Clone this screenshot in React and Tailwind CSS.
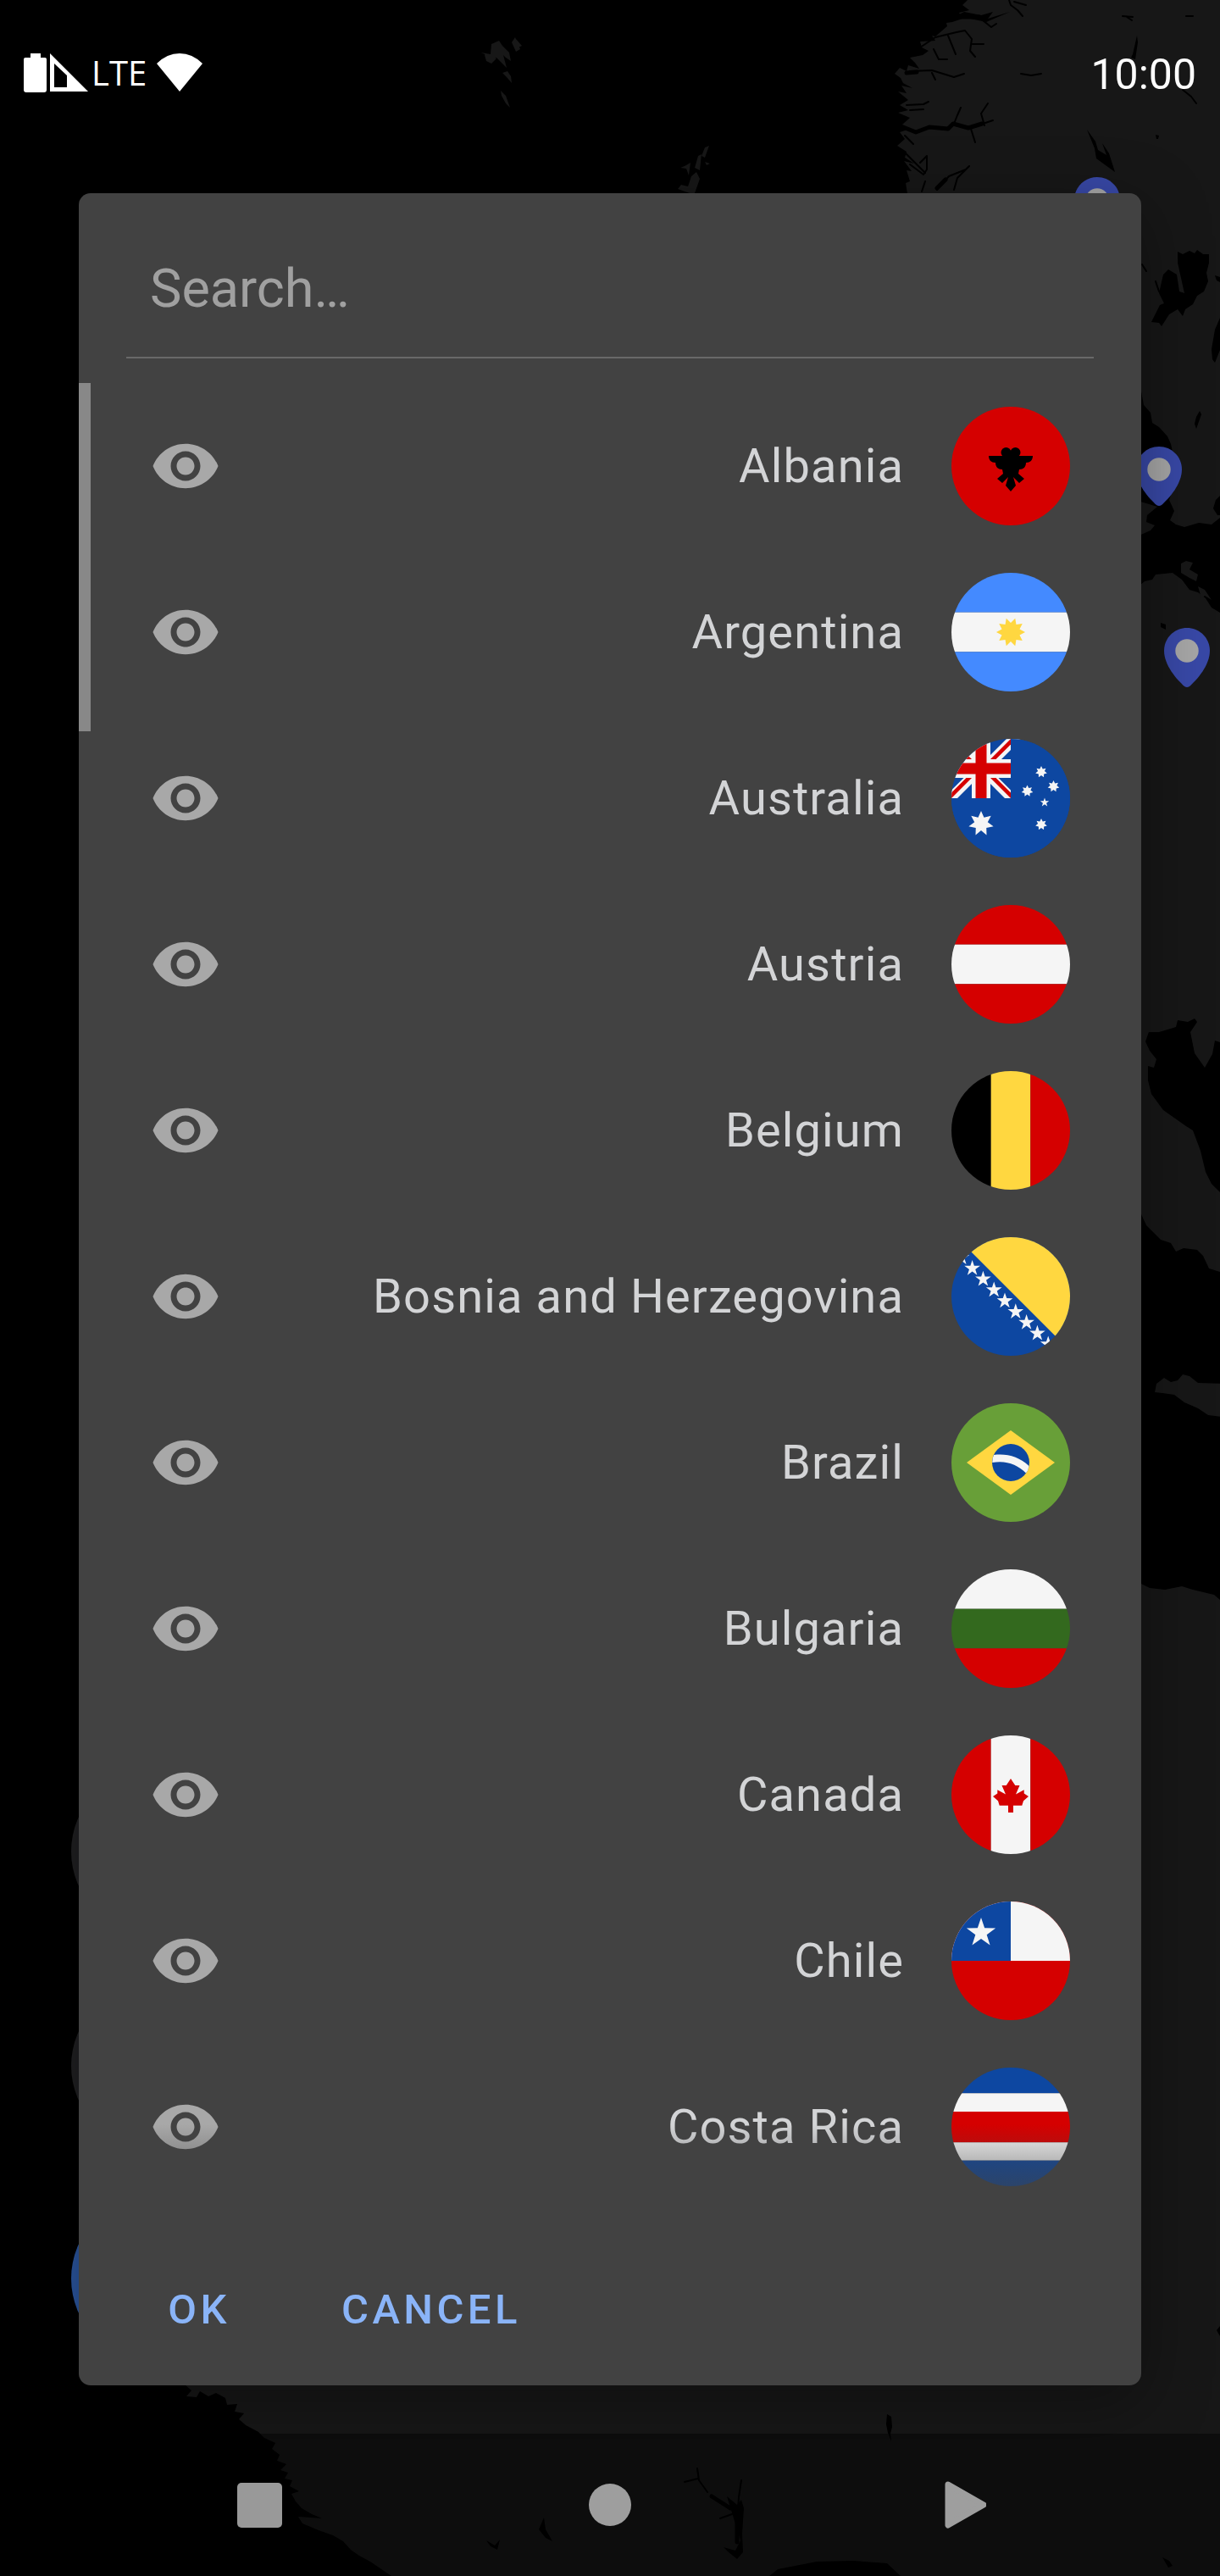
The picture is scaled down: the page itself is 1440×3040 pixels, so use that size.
import React from "react";

const RED = "#d50000";
const WHITE = "#f5f5f5";
const BLUE = "#0d47a1";
const YELLOW = "#ffd740";

function starPoints(cx, cy, outer, inner, count, turn = 0) {
  const pts = [];
  for (let i = 0; i < count * 2; i++) {
    const r = i % 2 === 0 ? outer : inner;
    const a = (Math.PI * i) / count - Math.PI / 2 + turn;
    pts.push(`${(cx + r * Math.cos(a)).toFixed(2)},${(cy + r * Math.sin(a)).toFixed(2)}`);
  }
  return pts.join(" ");
}

function Star({ x, y, r, inner = r * 0.39, n = 5, turn = 0, fill = WHITE }) {
  return <polygon points={starPoints(x, y, r, inner, n, turn)} fill={fill} />;
}

function Bands({ colors, stops, vertical }) {
  return colors.map((c, i) =>
    vertical ? (
      <rect key={i} x={stops[i]} y="0" width={stops[i + 1] - stops[i]} height="140" fill={c} />
    ) : (
      <rect key={i} x="0" y={stops[i]} width="140" height={stops[i + 1] - stops[i]} fill={c} />
    )
  );
}

const THIRDS = [0, 46.7, 93.3, 140];

const FLAGS = {
  al: (
    <>
      <rect width="140" height="140" fill={RED} />
      <circle cx="64.5" cy="54" r="6" />
      <circle cx="75.5" cy="54" r="6" />
      <path d="M62 58H44c0 5 3 8 8 8 0 5 3 8 8 8l1 5-7 6 6 5 7-7-3 10 6 7 6-7-3-10 7 7 6-5-7-6 1-5c5 0 8-3 8-8 5 0 8-3 8-8H78l-1-3H63z" />
    </>
  ),
  ar: (
    <>
      <Bands colors={["#448aff", WHITE, "#448aff"]} stops={THIRDS} />
      <Star x={70} y={70} r={17} inner={11} n={10} turn={Math.PI / 10} fill={YELLOW} />
    </>
  ),
  au: (
    <>
      <rect width="140" height="140" fill={BLUE} />
      <g fill={WHITE}>
        <path d="M0 -7L35 28 35 44.5 0 9.5z" />
        <path d="M35 25.5L70 60.5 70 77 35 42z" />
        <path d="M35 30L65 0H83L35 48z" />
        <path d="M0 60.5L35 25.5V42L7 70H0z" />
      </g>
      <g fill={RED}>
        <path d="M0 0L35 35V41.5L0 6.5z" />
        <path d="M35 28.5L70 63.5V70L35 35z" />
        <path d="M35 35L70 0V6.5L35 41.5z" />
        <path d="M0 63.5L35 28.5V35L0 70z" />
      </g>
      <path d="M24 0H46V24H70V46H46V70H24V46H0V24H24z" fill={WHITE} />
      <path d="M28.5 0H41.5V28.5H70V41.5H41.5V70H28.5V41.5H0V28.5H28.5z" fill={RED} />
      <path d="M70 0H140V140H0V70H70z" fill={BLUE} />
      <Star x={35} y={100} r={15} inner={8} n={7} />
      <Star x={106} y={39} r={7} inner={4} n={7} />
      <Star x={120.5} y={56} r={7} inner={4} n={7} />
      <Star x={89.5} y={61.5} r={7} inner={4} n={7} />
      <Star x={106} y={101} r={7} inner={4} n={7} />
      <Star x={110} y={75} r={5.5} />
    </>
  ),
  at: <Bands colors={[RED, WHITE, RED]} stops={THIRDS} />,
  be: <Bands colors={["#000000", YELLOW, RED]} stops={THIRDS} vertical />,
  ba: (
    <>
      <rect width="140" height="140" fill={BLUE} />
      <path d="M6 0H140V134z" fill={YELLOW} />
      {[0, 1, 2, 3, 4, 5, 6, 7, 8].map((i) => (
        <Star key={i} x={11.8 + i * 12.8} y={24 + i * 12.8} r={9.8} />
      ))}
    </>
  ),
  br: (
    <>
      <rect width="140" height="140" fill="#689f38" />
      <path d="M18 70L70 32 122 70 70 108z" fill={YELLOW} />
      <circle cx="70" cy="70" r="22" fill={BLUE} />
      <path d="M50 61C65 59 80 63 91.5 74Q91 79 88 82.5C78 72 64 67 48.2 70Q48 65 50 61z" fill={WHITE} />
    </>
  ),
  bg: <Bands colors={[WHITE, "#33691e", RED]} stops={THIRDS} />,
  ca: (
    <>
      <Bands colors={[RED, WHITE, RED]} stops={THIRDS} vertical />
      <path
        d="M70 51L75.3 59H80.5L76 69.5 85.7 64.3V68.5L91 72 85 77.3 83.3 82.7H73V91H67V82.7H56.7L55 77.3 49 72 54.3 68.5V64.3L64 69.5 59.5 59H64.7z"
        fill={RED}
      />
    </>
  ),
  cl: (
    <>
      <rect width="140" height="140" fill={RED} />
      <rect width="140" height="70" fill={WHITE} />
      <rect width="70" height="70" fill={BLUE} />
      <Star x={35} y={37} r={18} />
    </>
  ),
  cr: <Bands colors={[BLUE, WHITE, RED, WHITE, BLUE]} stops={[0, 30.3, 52, 88.3, 109.7, 140]} />,
};

const COUNTRIES = [
  ["al", "Albania"],
  ["ar", "Argentina"],
  ["au", "Australia"],
  ["at", "Austria"],
  ["be", "Belgium"],
  ["ba", "Bosnia and Herzegovina"],
  ["br", "Brazil"],
  ["bg", "Bulgaria"],
  ["ca", "Canada"],
  ["cl", "Chile"],
  ["cr", "Costa Rica"],
];

function Flag({ code }) {
  return (
    <svg viewBox="0 0 140 140" className="size-35 shrink-0 rounded-full" aria-hidden="true">
      {FLAGS[code]}
    </svg>
  );
}

function EyeIcon() {
  return (
    <svg viewBox="0 0 24 24" className="size-21" fill="#a8a8a8" aria-hidden="true">
      <path d="M12 4.500C7 4.500 2.730 7.610 1 12c1.730 4.390 6 7.500 11 7.500s9.270-3.110 11-7.500c-1.730-4.390-6-7.500-11-7.500zM12 17c-2.760 0-5-2.240-5-5s2.240-5 5-5 5 2.240 5 5-2.240 5-5 5zm0-8c-1.660 0-3 1.340-3 3s1.340 3 3 3 3-1.340 3-3-1.340-3-3-3z" />
    </svg>
  );
}

function Pin({ x, y }) {
  return (
    <g transform={`translate(${x} ${y})`}>
      <path d="M0 -27C-15 -27 -27 -15 -27 0C-27 17 -12 34 -3 42Q0 44 3 42C12 34 27 17 27 0C27 -15 15 -27 0 -27z" fill="#3848a6" />
      <circle r="13.7" fill="#a6a6a6" />
    </g>
  );
}

function MapBackground() {
  return (
    <svg
      viewBox="0 0 1440 3040"
      preserveAspectRatio="xMidYMid slice"
      className="absolute inset-0 h-full w-full"
      aria-hidden="true"
    >
      <rect width="1440" height="3040" fill="#000" />
      {/* land */}
      <g fill="#171717">
        <path d="M1142 0L1136 6 1144 12 1132 15 1136 22 1124 26 1117 27 1118 31 1104 43 1100 42 1104 48 1086 49 1088 56 1096 60 1089 65 1074 68 1080 74 1085 81 1072 77 1070 84 1062 80 1056 87 1063 92 1066 98 1077 104 1064 101 1070 110 1060 108 1072 118 1062 124 1072 130 1060 133 1074 139 1065 147 1074 152 1062 156 1068 164 1059 172 1070 179 1068 186 1079 193 1067 190 1076 202 1070 201 1074 214 1069 216 1076 260H1347V462L1350 478 1358 487 1360 499 1368 504 1378 515 1382 524 1390 560 1380 590 1386 603 1381 614 1388 619 1398 622 1415 617 1430 619 1440 611V0z" />
        <path d="M1340 590L1366 598 1354 608 1353 616 1363 620 1358 626 1340 634z" />
        <path d="M1340 695L1351 686 1360 684 1364 678 1384 676 1395 684 1404 696 1414 699 1423 706 1430 717 1440 723V1230L1434 1228 1431 1244 1422 1260 1410 1243 1405 1218 1413 1206 1410 1202 1402 1206 1390 1204 1388 1212 1368 1218 1356 1218 1352 1229 1357 1240 1365 1250 1362 1260 1355 1258V1275L1359 1291 1373 1310 1400 1329 1408 1334 1417 1358 1423 1383 1430 1397 1440 1407V1501L1427 1497 1420 1482 1413 1475 1397 1473 1388 1477 1382 1467 1370 1463 1353 1446 1347 1433H1340z" />
        <path d="M1340 1869H1347L1357 1874 1375 1876 1395 1872 1408 1876 1433 1882 1440 1888V3040H462L437 3023 424 3016 414 3009 405 2999 393 2992 376 2986 357 2978 352 2970 380 2972 368 2967 356 2960 349 2952 344 2943 353 2940 342 2934 345 2927 336 2925 340 2918 331 2915 338 2908 327 2904 330 2897 321 2890 325 2883 312 2877 305 2870 290 2862 282 2855 288 2848 277 2846 280 2837 268 2838 266 2830 255 2824 246 2828 236 2822 232 2829 220 2828 226 2821 219 2815V2760H1340z" />
        <path d="M1363 1643l2-10 9-7 8 5 8-2 6-7 8 2 10 8 36 1v45l-9-6-15-2-12-8-16-7-12-9-14-2z" />
        <path d="M580 52l9-4 4 6 8 8 2 10-6-4-3-3 4 15-12-12-10 4-4-8-4-2 11 2zM572 65l14 4-6 6-6-3zM593 86l6-2 4 6 1 8-6-7zM591 107l6 6 5 14-5-5-5-9zM604 50l4-6 6 14-5 3zM609 46l7 8-4 2z" />
        <path d="M832 174l5-2-5 14-4-2zM824 184l4-2-2 19-6-3zM832 191l6 2-4 2zM808 196l7-4-2 15-3-8-7-1zM816 208l6-5 4 8-6 17h-6l-14-5 4-5 8 2z" />
        <path d="M1394 665l6-3 8 2-4 8 10 6-2 8-8-4-10-6zM1414 692l8 4 8 12-8-5-4 3z" />
      </g>
      {/* lakes */}
      <g fill="#000">
        <path d="M1390 297l6 3 8-4 6 3 3-4 7 5 7 0 0 10-3 12 2 10-5 12-8 5-5 10-9 6-3 8-6-8-10 6-9 14-3-4-9-1 10-20 5-2-6-12 5-22 6-6 10 6 3 20 6 2-8-36z" />
        <path d="M1440 375l-6 14-4 23 1 12 3 4 6-15zM1434 325l2 6 4 2v-6zM1412 492l4-7 2 4-6 17-2-6zM1283 153l10 14 3 10 10 6-5-14 8 12 7 22-22-16-2-12zM1337 64l5-22 1 8-3 20-5-2zM1364 159l4 1-1 4-2 0zM1370 735l6 2v6l-6-3zM1440 585l-5 5-3 10 5 8h3z" />
        <path d="M1047 2849l5 3 1 12-2 8 1 9-4-10-2-10zM858 2946l12 10 5-6 3 10-2 30 1 22-7 8-10-8-6-6 14 4 6-12zM1372 3018l8 4 4 6-5 2z" />
        <path d="M908 3040l10-8 46-9 43-1 40 3 16 15zM636 2985l6-14 2 14 8 14-8-4zM574 2998l10 6 6-7-3 12-8-4zM1436 2750l4-5v12z" />
        <path d="M1138 14l20 4 14-4-6 8 26-8-28 12-28-6-6-2z" />
      </g>
      {/* fjords and rivers */}
      <g fill="none" stroke="#000" strokeLinecap="round" strokeLinejoin="round">
        <g strokeWidth="2">
          <path d="M1191 0l2 6 8 6 6 7M1197 2l14 4M1160 24l10 8 6-4M1074 64l30-20 25-6 10-2 8 10-2 14 6 7M1147 52l14 0M1119 42l9 22M1102 58l6 12 10 0M1074 84l26-1 26 8 12-4M1100 86l4 8M1205 87l12 2 12-2M1070 124l20-1 6-3M1074 130l16-1M1126 146l4-10 4-9M1162 148l-4-14 8-12M1160 146l12-4M1146 152l5 16M1068 160l10 10M1074 194l16 12 4-6v-16l-8 8M1068 180l24 24M1106 224l14-16 20-8M1126 224l4-14 14-14M1088 226l4-12M1400 19l8 0M1325 19l12 1M1330 20l6 4M1396 106l10 8 6 8M1348 312l5 8M1364 332l4 12M823 2913l2 14 10 14M808 2929l16-4M875 2927l-3 20-1 14M850 2972l14-5" />
        </g>
        <g strokeWidth="5">
          <path d="M1066 150l15 6 16-6 22 2 6-6 18 5 16-5M1070 86l12-1M1134 20l22 0M1106 222l10-10M840 2946l22 14M870 2960v40" />
        </g>
      </g>
      {/* floating buttons behind the dialog */}
      <circle cx="182" cy="2185" r="98" fill="#202022" />
      <circle cx="182" cy="2438" r="98" fill="#202022" />
      <circle cx="182" cy="2689" r="98" fill="#2b569f" />
      <Pin x={1295} y={236} />
      <Pin x={1368} y={554} />
      <Pin x={1401} y={768} />
    </svg>
  );
}

function StatusBar() {
  return (
    <header className="flex h-[172px] w-full items-center justify-between px-7 text-white">
      <div className="flex items-center">
        <svg viewBox="0 0 76 46" className="h-[46px] w-[76px]" fill="#fff" aria-hidden="true">
          <path d="M8 0H20V5H25Q27 5 27 7V43Q27 46 24 46H3Q0 46 0 43V7Q0 5 2 5H8z" />
          <path d="M31 0L76 45H31zM36 12V40H51V26z" fillRule="evenodd" />
        </svg>
        <span className="ml-1 font-['Open_Sans',sans-serif] text-[40px] leading-none">LTE</span>
        <svg viewBox="0 0 54 46" className="ml-3 h-[46px] w-[54px]" fill="#fff" aria-hidden="true">
          <path d="M0 12Q12 0 27 0T54 12L27 45z" />
        </svg>
      </div>
      <time className="pt-1 text-[50px] leading-none">10:00</time>
    </header>
  );
}

function CountryRow({ code, name }) {
  return (
    <li className="flex h-49 items-center px-21">
      <button type="button" aria-label={`Show ${name}`} className="shrink-0">
        <EyeIcon />
      </button>
      <span className="min-w-0 flex-1 truncate pr-14 text-right text-[56px] leading-[66px] tracking-[0.02em] text-[#d3d4d6]">
        {name}
      </span>
      <Flag code={code} />
    </li>
  );
}

function CountryDialog() {
  return (
    <section
      role="dialog"
      aria-label="Countries"
      className="overflow-hidden rounded-[14px] bg-[#424242] shadow-[0_20px_80px_rgba(0,0,0,0.35)]"
    >
      <div className="h-56 px-14 pt-8">
        <input
          type="text"
          placeholder="Search…"
          aria-label="Search countries"
          className="block h-[163px] w-full border-b-2 border-[#696969] bg-transparent px-7 text-[63px] text-white outline-none placeholder:text-[#a0a0a0]"
        />
      </div>
      <div className="relative">
        <ul className="pb-[25px]">
          {COUNTRIES.map(([code, name]) => (
            <CountryRow key={code} code={code} name={name} />
          ))}
        </ul>
        <div className="absolute top-0 left-0 h-[411px] w-3.5 bg-[#888888]" />
        <div className="pointer-events-none absolute inset-x-0 bottom-0 h-[126px] bg-linear-to-b from-[#424242]/0 to-[#424242]" />
      </div>
      <div className="flex h-[182px] items-center gap-7 px-[30px] pt-1 text-[49px] font-medium tracking-[0.09em] text-[#8ab4f8]">
        <button type="button" className="min-w-56 px-7">
          OK
        </button>
        <button type="button" className="min-w-56 px-7">
          CANCEL
        </button>
      </div>
    </section>
  );
}

function NavigationBar() {
  return (
    <nav aria-label="System navigation" className="mt-auto grid h-42 grid-cols-3 items-center justify-items-center bg-black/40 px-[99px]">
      <button type="button" aria-label="Recent apps">
        <div className="size-[53px] rounded-[5px] bg-[#999999]" />
      </button>
      <button type="button" aria-label="Home">
        <div className="size-[50px] rounded-full bg-[#9e9e9e]" />
      </button>
      <button type="button" aria-label="Back">
        <svg viewBox="0 0 60 60" className="size-15" aria-hidden="true">
          <path d="M15 6L57 30 15 54z" fill="#9e9e9e" stroke="#9e9e9e" strokeWidth="7" strokeLinejoin="round" />
        </svg>
      </button>
    </nav>
  );
}

export default function App() {
  return (
    <div className="relative min-h-screen overflow-hidden bg-black font-['Roboto',sans-serif]">
      <MapBackground />
      <div className="relative flex min-h-screen flex-col">
        <StatusBar />
        <main className="px-[93px] pt-14 pb-14">
          <CountryDialog />
        </main>
        <NavigationBar />
      </div>
    </div>
  );
}
